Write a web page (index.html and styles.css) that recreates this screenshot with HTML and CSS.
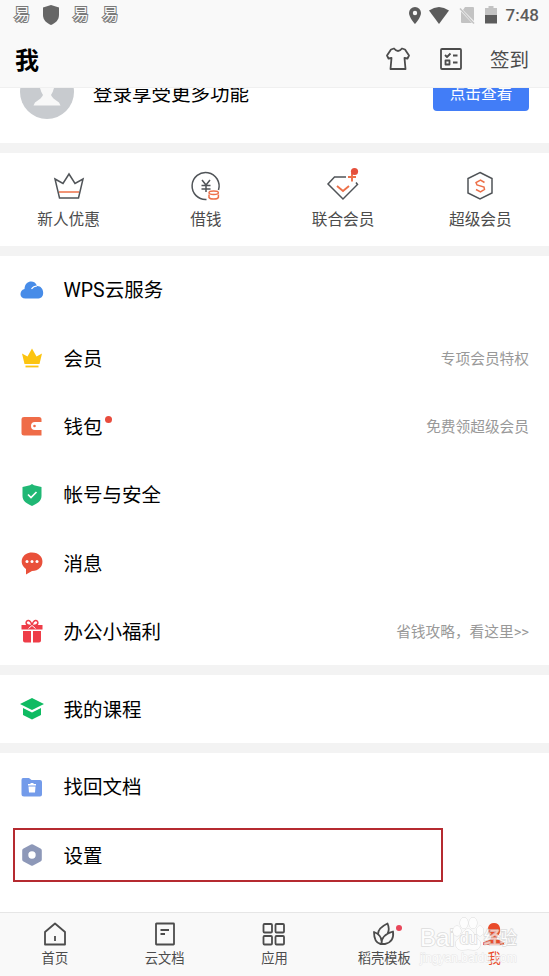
FILE: index.html
```html
<!DOCTYPE html>
<html lang="zh-CN">
<head>
  <meta charset="UTF-8">
  <meta name="viewport" content="width=device-width, initial-scale=1.0">
  <title>我</title>
  <link rel="stylesheet" href="styles.css">
</head>
<body>

  <div class="app">
    <!-- 状态栏 -->
    <div class="status-bar">
      <div class="status-left">
        <span class="notice">易</span>
        <svg width="18" height="20" viewBox="0 0 18 20"><path d="M9 0 17 2.500V10c0 5-3.500 8-8 10C4.500 18 1 15 1 10V2.500z" fill="#666"/></svg>
        <span class="notice">易</span>
        <span class="notice">易</span>
      </div>
      <div class="status-right">
        <svg width="12" height="17" viewBox="0 0 12 17"><path fill-rule="evenodd" d="M6 0a6 6 0 0 0-6 6c0 4.500 6 11 6 11s6-6.500 6-11a6 6 0 0 0-6-6zm0 3.800a2.200 2.200 0 1 1 0 4.400 2.200 2.200 0 0 1 0-4.400z" fill="#5c5c5c"/></svg>
        <svg width="20" height="17" viewBox="0 0 20 17"><path d="M0 3.500Q10-3.500 20 3.500L10 17z" fill="#5c5c5c"/></svg>
        <svg width="16" height="17" viewBox="0 0 16 17"><path d="M6 0h8q1 0 1 1v13L4 3zM2 4.500 13 16H3q-1 0-1-1z" fill="#c3c3c3"/><path d="m1 1.500 14 15" stroke="#c3c3c3" stroke-width="1.500"/></svg>
        <svg width="12" height="18" viewBox="0 0 12 18"><path d="M3.500 0h5v2H12v7H0V2h3.500z" fill="#c3c3c3"/><path d="M0 9h12v8.500H0z" fill="#5c5c5c"/></svg>
        <span class="time">7:48</span>
      </div>
    </div>

    <!-- 标题栏 -->
    <header class="header">
      <h1>我</h1>
      <div class="header-actions">
        <svg width="24" height="24" viewBox="0 0 24 24" class="line"><path d="M8 1.500Q12 6.500 16 1.500L19 2.500 23 8.500 21.500 11.500 18.500 11 19.500 22H4.500L5.500 11 2.500 11.500 1 8.500 5 2.500z"/></svg>
        <svg width="22" height="22" viewBox="0 0 22 22" class="line"><rect x="1" y="1" width="20" height="20" rx="1"/><path d="m5 7 2 2 3.500-3.500M13 7.500h4.500M13 14.500h4.500M5.500 12.500h4v4h-4z"/></svg>
        <span>签到</span>
      </div>
    </header>

    <section class="profile">
      <div class="profile-inner">
        <svg class="avatar" width="54" height="54" viewBox="0 0 54 54"><circle cx="27" cy="27" r="27" fill="#c8cbcf"/><path d="M20 14q7-6 14 0v9q-1 4-3 7 1 3 8 7.500l1.500 3h-27l1.500-3q7-4.500 8-7.500-2-3-3-7z" fill="#f8f8f8"/></svg>
        <span class="profile-text">登录享受更多功能</span>
        <button class="view-btn">点击查看</button>
      </div>
    </section>

    <!-- 快捷入口 -->
    <section class="shortcuts">
      <div class="shortcut">
        <svg width="34" height="34" viewBox="0 0 34 34"><path d="m3 10 8 4.500 6-9.500 6 9.500 8-4.500-4.500 19h-19z" class="thin"/><path d="M7 23h20" class="thin orange"/></svg>
        <span>新人优惠</span>
      </div>
      <div class="shortcut">
        <svg width="34" height="34" viewBox="0 0 34 34"><path d="M17.500 30.500A13.500 13.500 0 1 1 29.500 21M13 11l4 5 4-5M12.500 16.500h9M12.500 20h9M17 16v7" class="thin"/><g class="thin orange"><ellipse cx="24.700" cy="23.800" rx="4.700" ry="1.700"/><path d="M20 25.500v3q1 1.500 4.700 1.500t4.700-1.500v-3"/></g></svg>
        <span>借钱</span>
      </div>
      <div class="shortcut">
        <svg width="34" height="34" viewBox="0 0 34 34"><path d="M20 8H8.500L2 15l15 15 14.500-14.500-1.500-2" class="thin"/><path d="m11 17 6 5 6-5M26 4v8.500M22 8h8" class="thin orange strong"/><circle cx="28.500" cy="2.500" r="3.600" fill="#e5503c"/></svg>
        <span>联合会员</span>
      </div>
      <div class="shortcut">
        <svg width="34" height="34" viewBox="0 0 34 34"><path d="m17 3.500 12 6v14.500l-12 6-12-6V9.500z" class="thin"/><path d="m21.500 13.500-4-2.500-4.500 2.500 1 2.500 7 2 .5 2.500-4 2.500-4.500-2.500" class="thin orange"/></svg>
        <span>超级会员</span>
      </div>
    </section>

    <section class="list">
      <div class="row">
        <svg width="24" height="24" viewBox="0 0 24 24"><path d="M5.500 20.500C-1 20.500-1 12.500 4.500 11 5 2 15 1.500 17 8c7-.5 9 12 1.500 12.500z" fill="#478ce8"/><path d="M11.500 11q2-3 5.500-3" fill="none" stroke="#fff" stroke-width="1.200"/></svg>
        <span class="name">WPS云服务</span>
      </div>
      <div class="row">
        <svg width="24" height="24" viewBox="0 0 24 24"><path d="m2 7.500 5.500 3L12 2.500l4.500 8 5.500-3L19.500 18h-15z" fill="#fcc40f"/><path d="M5.500 20.500h13" stroke="#fcc40f" stroke-width="1.800"/></svg>
        <span class="name">会员</span>
        <span class="note">专项会员特权</span>
      </div>
      <div class="row">
        <svg width="24" height="24" viewBox="0 0 24 24"><path d="M4 3h15q2.500 0 2.500 2.500V8H15a4 4 0 0 0 0 8h6.500v5.500H4q-2.500 0-2.500-2V5Q1.500 3 4 3z" fill="#ef6c48"/><path d="M15 9h7v6h-7a3 3 0 0 1 0-6z" fill="#fff"/><circle cx="14.500" cy="12" r="1.300" fill="#ef6c48"/></svg>
        <span class="name">钱包<i class="dot"></i></span>
        <span class="note">免费领超级会员</span>
      </div>
      <div class="row">
        <svg width="24" height="24" viewBox="0 0 24 24"><path d="m12 1 2 1.200L21.500 4v9c0 5-4 7.500-9.500 10-5.500-2.500-9.500-5-9.500-10V4L10 2.200z" fill="#20b875"/><path d="m8 11.500 3 3 5.500-5.500" fill="none" stroke="#fff" stroke-width="1.700"/></svg>
        <span class="name">帐号与安全</span>
      </div>
      <div class="row">
        <svg width="24" height="24" viewBox="0 0 24 24"><path d="M12 1.500c14 0 14 18.500 0 18.500l-6 3.500V18C-2 12 2 1.500 12 1.500z" fill="#e9503a"/><g fill="#fff"><circle cx="7" cy="10.500" r="1.500"/><circle cx="12" cy="10.500" r="1.500"/><circle cx="17" cy="10.500" r="1.500"/></g></svg>
        <span class="name">消息</span>
      </div>
      <div class="row">
        <svg width="24" height="24" viewBox="0 0 24 24"><path d="M1.500 6h21v4.500h-21zM3 12h8v11.500H5q-2 0-2-2zM13 12h8v9.500q0 2-2 2h-6z" fill="#ee3d48"/><path d="M12 6.500C4 7 5.500 1 8.500 1.500q2.500.5 3.500 5c8 .5 6.500-5.500 3.500-5q-2.500.5-3.500 5z" fill="#fff" stroke="#ee3d48" stroke-width="1.500"/><path d="M8.500 9.500 12 6.500l3.500 3" fill="none" stroke="#fff"/></svg>
        <span class="name">办公小福利</span>
        <span class="note">省钱攻略，看这里&gt;&gt;</span>
      </div>
    </section>

    <section class="list">
      <div class="row">
        <svg width="24" height="24" viewBox="0 0 24 24"><path d="m12 1 12 6-12 6L0 7zM3 11l9 4.500 9-4.500v7l-9 4.500L3 18z" fill="#0fbb62"/></svg>
        <span class="name">我的课程</span>
      </div>
    </section>

    <section class="list">
      <div class="row">
        <svg width="24" height="24" viewBox="0 0 24 24"><path d="M3 3h6l2.500 2H20q2 0 2 2v12.500q0 2-2 2H4q-2.500 0-2.500-2.500V5Q1.500 3 3 3z" fill="#739bea"/><path d="M8 9h2.500V8h3v1H16v1.500H8zM8.500 11.500h7L15 17.500H9z" fill="#fff"/></svg>
        <span class="name">找回文档</span>
      </div>
      <div class="row">
        <svg width="24" height="24" viewBox="0 0 24 24"><path fill-rule="evenodd" d="M11 1.500q1-.7 2 0l7.500 4q1.300.7 1.300 2v9q0 1.300-1.300 2l-7.500 4q-1 .7-2 0l-7.500-4q-1.300-.7-1.300-2v-9q0-1.300 1.300-2zM12 8.300a3.700 3.700 0 1 0 0 7.400 3.700 3.700 0 0 0 0-7.400z" fill="#8d98b8"/></svg>
        <span class="name">设置</span>
        <div class="highlight"></div>
      </div>
    </section>

    <!-- 底部导航 -->
    <nav class="tab-bar">
      <div class="tab">
        <svg width="24" height="24" viewBox="0 0 24 24" class="line"><path d="M2 10 12 1.500 22 10v12.500H2zM12 14v5"/></svg>
        <span>首页</span>
      </div>
      <div class="tab">
        <svg width="24" height="24" viewBox="0 0 24 24" class="line"><rect x="3" y="1.500" width="18" height="21" rx=".5"/><path d="M7.500 8H16M7.500 12H12"/></svg>
        <span>云文档</span>
      </div>
      <div class="tab">
        <svg width="24" height="24" viewBox="0 0 24 24" class="line"><rect x="1.500" y="2" width="8.500" height="8.500" rx="1"/><rect x="13.500" y="2" width="8.500" height="8.500" rx="1"/><rect x="1.500" y="14" width="8.500" height="8.500" rx="1"/><rect x="13.500" y="14" width="8.500" height="8.500" rx="1"/></svg>
        <span>应用</span>
      </div>
      <div class="tab">
        <svg width="24" height="24" viewBox="0 0 24 24" class="line"><path d="M6 12Q6 6 15.500 1.500 18 7 15.500 12M9.500 22Q9 13 21 9.500 22.500 20 13 22H8.500Q2 20.500 2 10 9.500 13 9.500 19"/></svg>
        <i class="tab-dot"></i>
        <span>稻壳模板</span>
      </div>
      <div class="tab active">
        <svg width="24" height="24" viewBox="0 0 24 24"><path d="M6 6q1-5 6-5t6 5-3 9v2l7 3.500V23H1v-2.500L9 17v-2Q6 12 6 6z" fill="#e94b2b"/></svg>
        <span>我</span>
      </div>
      <div class="watermark">
        <div class="wm-brand">
          <span>Bai</span>
          <span class="paw"><svg width="32" height="34" viewBox="0 0 32 34"><g fill="#fff" stroke="#d0d0d0" stroke-width="1"><ellipse cx="5" cy="14" rx="4" ry="5"/><ellipse cx="12" cy="6" rx="4" ry="5.500"/><ellipse cx="21" cy="6" rx="4" ry="5.500"/><ellipse cx="28" cy="14" rx="3.500" ry="5"/><path d="M16 12c5 0 6 7 10 10s3 11-4 11q-6-1-12 0c-7 0-8-8-4-11s5-10 10-10z"/></g></svg><b>du</b></span>
          <span class="wm-cn">经验</span>
        </div>
        <div class="wm-url">jingyan.baidu.com</div>
      </div>
    </nav>
  </div>

</body>
</html>
```
FILE: styles.css
```css
* {
  box-sizing: border-box;
}

body {
  margin: 0;
  font-family: Roboto, "Noto Sans CJK SC", sans-serif;
  background-color: #f3f3f3;
  color: #000;
}

svg {
  display: block;
  flex: none;
  overflow: visible;
}

.line {
  fill: none;
  stroke: #4c4c4c;
  stroke-width: 1.8;
  stroke-linejoin: round;
}

.thin {
  fill: none;
  stroke: #505458;
  stroke-width: 1.5;
}

.orange {
  stroke: #ed7049;
}

.strong {
  stroke-width: 1.9;
}

.app {
  display: flex;
  flex-direction: column;
  height: 976px;
  overflow: hidden;
}

/* 状态栏 */
.status-bar {
  display: flex;
  justify-content: space-between;
  align-items: center;
  height: 30px;
  padding: 0 10px 0 14px;
  background-color: #f9f9f9;
}

.status-left {
  display: flex;
  align-items: center;
  gap: 13.4px;
}

.status-left svg {
  margin: 0 -1px;
}

.notice {
  width: 16px;
  font-size: 16px;
  line-height: 28px;
  color: #f9f9f9;
  -webkit-text-stroke: 2px #7b7b7b;
  paint-order: stroke fill;
}

.status-right {
  display: flex;
  align-items: center;
  gap: 10px;
}

.status-right svg:first-child {
  margin-right: -2px;
}

.time {
  font-size: 17px;
  font-weight: 500;
  color: #5c5c5c;
  margin-left: -1px;
}

/* 标题栏 */
.header {
  display: flex;
  justify-content: space-between;
  align-items: center;
  height: 58px;
  padding: 0 20px 0 15px;
  background-color: #f9f9f9;
  border-bottom: 1px solid #f0f0f0;
}

.header h1 {
  margin: 0;
  font-size: 24px;
  font-weight: bold;
}

.header-actions {
  display: flex;
  align-items: center;
  gap: 29px;
  font-size: 19.5px;
  color: #4c4c4c;
}

.header-actions svg:first-child {
  margin-right: 1px;
}

.header-actions span {
  margin-left: -1px;
}

/* 登录区，上半部分滚动到标题栏下面 */
.profile {
  display: flex;
  align-items: flex-end;
  height: 55px;
  padding: 0 20px 24px;
  background-color: #fff;
  overflow: hidden;
}

.profile-inner {
  display: flex;
  align-items: center;
  flex: 1;
  height: 54px;
}

.profile-text {
  flex: 1;
  margin-left: 19px;
  font-size: 19.5px;
}

.view-btn {
  width: 96px;
  height: 38px;
  padding: 0;
  border: none;
  border-radius: 4px;
  background-color: #427df7;
  color: #fff;
  font-family: inherit;
  font-size: 15.7px;
}

/* 快捷入口 */
.shortcuts {
  display: grid;
  grid-template-columns: repeat(4, 1fr);
  height: 93px;
  margin-top: 10px;
  padding-top: 16px;
  background-color: #fff;
}

.shortcut {
  display: flex;
  flex-direction: column;
  align-items: center;
  gap: 6px;
  font-size: 15.7px;
  line-height: 22px;
  color: #4c4c4c;
}

/* 列表 */
.list {
  margin-top: 9.5px;
  background-color: #fff;
}

.row {
  position: relative;
  display: flex;
  align-items: center;
  height: 68.3px;
  padding: 0 20px;
}

.name {
  margin-left: 19.5px;
  padding-top: 3.5px;
  font-size: 19.5px;
  line-height: 28px;
}

.dot {
  display: inline-block;
  width: 7px;
  height: 7px;
  margin-left: 2px;
  border-radius: 50%;
  background-color: #e84c3d;
  vertical-align: 11px;
}

.note {
  margin-left: auto;
  padding-bottom: 1px;
  font-size: 14.7px;
  color: #999;
}

.highlight {
  position: absolute;
  top: 7px;
  left: 13px;
  width: 430px;
  height: 54px;
  border: 2px solid #b52a30;
}

.list:last-of-type {
  flex: 1;
}

/* 底部导航 */
.tab-bar {
  position: relative;
  display: grid;
  grid-template-columns: repeat(5, 1fr);
  height: 64px;
  padding-top: 9px;
  background-color: #f9f9f9;
  border-top: 1px solid #e6e6e6;
}

.tab {
  position: relative;
  display: flex;
  flex-direction: column;
  align-items: center;
  gap: 3px;
  font-size: 13.3px;
  line-height: 20px;
  color: #4c4c4c;
}

.active {
  color: #e94b2b;
}

.tab-dot {
  position: absolute;
  top: 3px;
  left: 67px;
  width: 6px;
  height: 6px;
  border-radius: 50%;
  background-color: #e8475a;
}

.watermark {
  position: absolute;
  top: 4px;
  left: 420px;
  width: 100px;
  font-family: "Liberation Sans", "Noto Sans CJK SC", sans-serif;
  color: #fff;
  -webkit-text-stroke: 1.6px #d0d0d0;
  paint-order: stroke fill;
  opacity: 0.7;
}

.wm-brand {
  display: flex;
  align-items: flex-end;
  height: 34px;
  font-size: 24px;
  line-height: 26px;
}

.paw {
  position: relative;
  margin-left: -3px;
}

.paw b {
  position: absolute;
  left: 8px;
  bottom: -1px;
  font-size: 16px;
  font-weight: normal;
}

.wm-cn {
  font-size: 16.5px;
}

.wm-url {
  font-size: 12px;
  line-height: 14px;
  -webkit-text-stroke: 1px #dedede;
}
```
